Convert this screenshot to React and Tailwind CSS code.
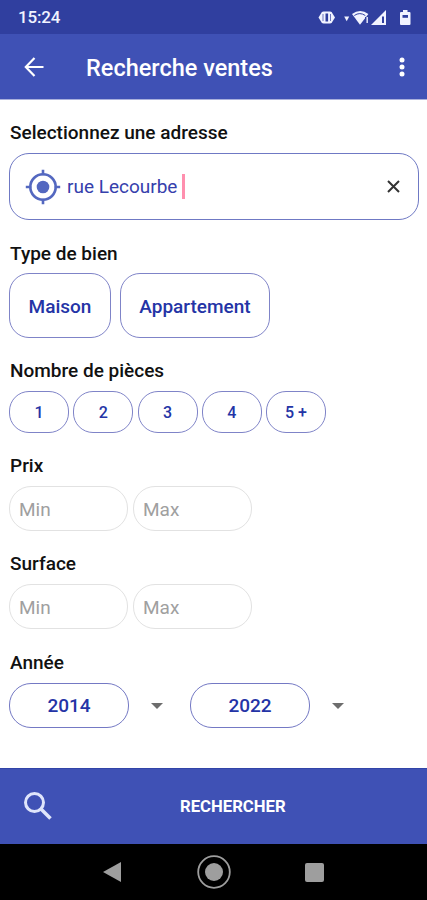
import { useState } from 'react';

const ROOMS = ['1', '2', '3', '4', '5 +'];

const StatusIcons = () => (
  <svg width="98" height="20" viewBox="0 0 98 20" fill="#f1f3ff">
    <path d="M6.500 4.500h6.500q2 0 2.500 2l2.500 4-2.500 4q-.5 2-2.500 2H6.500q-2 0-2.500-2l-2.500-4 2.500-4q.5-2 2.500-2z" transform="translate(1 0)" />
    <path d="M7 7v7M14.500 7v7" stroke="#303f9f" strokeWidth=".7" />
    <path d="M9.500 6.500h2.600v8H9.500z" fill="#303f9f" />
    <path d="M28.200 9.500h5l-2.500 4.800z" />
    <path d="M36 7.100q8.200-6.300 16.400 0L44 17.700z" />
    <path d="M38.300 8.500q5.500-3.800 11 0" fill="none" stroke="#303f9f" strokeWidth="1" />
    <path d="M49.500 10v7" stroke="#303f9f" strokeWidth="1" />
    <path d="M51.200 10v6" stroke="#d5d9f3" strokeWidth="1.600" />
    <path d="M55 18L70 3v15z" />
    <path d="M66 9.500h2v6.500h-2z" fill="#303f9f" />
    <path d="M87 3h4.500v2h2q1 0 1 1v11q0 1-1 1h-8.500q-1 0-1-1V6q0-1 1-1h2z" />
    <path d="M86.500 8h5.500v2.800h-5.500z" fill="#303f9f" />
  </svg>
);

const TargetIcon = () => (
  <svg width="36" height="36" viewBox="0 0 36 36" fill="none" stroke="#5468c0">
    <circle cx="18" cy="18" r="12.700" strokeWidth="2.600" />
    <path d="M18 .8v5.500M18 29.700v5.500M.8 18h5.500M29.700 18h5.500" strokeWidth="2.600" />
    <circle cx="18" cy="18" r="6.300" fill="#5468c0" stroke="none" />
  </svg>
);

const Label = ({ children }) => (
  <h2 className="h-6 pl-px pt-px text-[19px] leading-6 font-medium text-[#111111] whitespace-nowrap">{children}</h2>
);

const RangeInputs = () => (
  <div className="flex gap-[5px]">
    {['Min', 'Max'].map((name) => (
      <input
        key={name}
        placeholder={name}
        className="w-[119px] h-[45px] rounded-[22px] border border-[#e2e2e2] pl-[9px] pr-2 pt-[2px] text-[19px] outline-none placeholder:text-[#a0a0a0]"
      />
    ))}
  </div>
);

const YearSelect = ({ year }) => (
  <div className="flex items-center">
    <button className="w-[120px] h-[45px] rounded-[22px] border border-[#7479c4] pt-[2px] text-[19px] font-medium text-[#2434a6]">
      {year}
    </button>
    <svg className="ml-[22px]" width="12" height="6" viewBox="0 0 12 6" fill="#6d6d6d">
      <path d="M0 0h12L6 6z" />
    </svg>
  </div>
);

const App = () => {
  const [address, setAddress] = useState('rue Lecourbe');

  return (
    <div className="w-[427px] h-[900px] flex flex-col overflow-hidden bg-white font-['Roboto',sans-serif]">
      <div className="h-[34px] shrink-0 flex items-center justify-between bg-[#303f9f] pl-[18px] pr-[13px] text-[17px] font-medium text-[#f1f3ff]">
        <span className="pt-[2px] tracking-[-0.2px]">15:24</span>
        <StatusIcons />
      </div>

      <header className="h-[66px] shrink-0 flex items-center border-b border-[#a9b0dc] bg-[#3f51b5] pl-6 text-white">
        <svg width="20" height="20" viewBox="0 0 20 20" fill="none" stroke="currentColor" strokeWidth="2.200">
          <path d="M19.500 10H2M10.500 1L1.800 10l8.700 9" />
        </svg>
        <h1 className="ml-[42px] flex-1 pt-[4px] text-[23.500px] font-medium whitespace-nowrap">Recherche ventes</h1>
        <svg className="mr-[22px]" width="6" height="20" viewBox="0 0 6 20" fill="currentColor">
          <circle cx="3" cy="3" r="2.500" />
          <circle cx="3" cy="10" r="2.500" />
          <circle cx="3" cy="17" r="2.500" />
        </svg>
      </header>

      <main className="flex-1 flex flex-col pl-[9px] pr-2 pt-[20px]">
        <Label>Selectionnez une adresse</Label>
        <div className="mt-[9px] h-[67px] flex items-center rounded-[20px] border border-[#6f79c4] pl-[15px] pr-[18px]">
          <TargetIcon />
          <div className="ml-[6px] flex-1 flex items-center">
            <input
              value={address}
              onChange={(e) => setAddress(e.target.value)}
              className="w-[115px] pt-[2px] text-[19px] text-[#3540ac] outline-none"
            />
            <span className="w-[3px] h-[25px] bg-[#ff8fae]" />
          </div>
          <button onClick={() => setAddress('')}>
            <svg width="13" height="13" viewBox="0 0 13 13" stroke="#333333" strokeWidth="2">
              <path d="M1 1l11 11M12 1L1 12" />
            </svg>
          </button>
        </div>

        <div className="mt-[21px]">
          <Label>Type de bien</Label>
        </div>
        <div className="mt-[8px] flex gap-[9px] text-[19px] font-medium text-[#2434a6]">
          <button className="w-[102px] h-[65px] rounded-[20px] border border-[#7f84c8] pt-[3px]">Maison</button>
          <button className="w-[150px] h-[65px] rounded-[20px] border border-[#7f84c8] pt-[3px]">Appartement</button>
        </div>

        <div className="mt-[20px]">
          <Label>Nombre de pièces</Label>
        </div>
        <div className="mt-[9px] flex gap-[4.250px] text-[16px] font-medium text-[#2434a6]">
          {ROOMS.map((room) => (
            <button key={room} className="w-[60px] h-[42px] rounded-[20px] border border-[#7f84c8] pt-[2px]">
              {room}
            </button>
          ))}
        </div>

        <div className="mt-[20px] mb-[9px]">
          <Label>Prix</Label>
        </div>
        <RangeInputs />

        <div className="mt-[20px] mb-[9px]">
          <Label>Surface</Label>
        </div>
        <RangeInputs />

        <div className="mt-[21px] mb-[9px]">
          <Label>Année</Label>
        </div>
        <div className="flex gap-[27px]">
          <YearSelect year="2014" />
          <YearSelect year="2022" />
        </div>
      </main>

      <button className="h-[76px] shrink-0 flex items-center border-t border-[#3244a8] bg-[#3f51b5] pl-6 text-white">
        <svg width="28" height="28" viewBox="0 0 28 28" className="-mt-[2px]" fill="none" stroke="#dfe5fb">
          <circle cx="10.500" cy="10.500" r="9" strokeWidth="3" />
          <path d="M17 17l9.500 9.500" strokeWidth="3.600" />
        </svg>
        <span className="ml-[128px] pt-px text-[16.700px] font-bold">RECHERCHER</span>
      </button>

      <nav className="h-[56px] shrink-0 flex items-center bg-black pl-[103px]">
        <svg width="18" height="20" viewBox="0 0 18 20" fill="#9e9e9e">
          <path d="M0 10L18 0v20z" />
        </svg>
        <svg className="ml-[76px]" width="34" height="34" viewBox="0 0 34 34" fill="#9e9e9e">
          <circle cx="17" cy="17" r="15.800" fill="none" stroke="#9e9e9e" strokeWidth="1.800" />
          <circle cx="17" cy="17" r="9" />
        </svg>
        <span className="ml-[74px] w-[19px] h-[19px] rounded-[2px] bg-[#9e9e9e]" />
      </nav>
    </div>
  );
};

export default App;
